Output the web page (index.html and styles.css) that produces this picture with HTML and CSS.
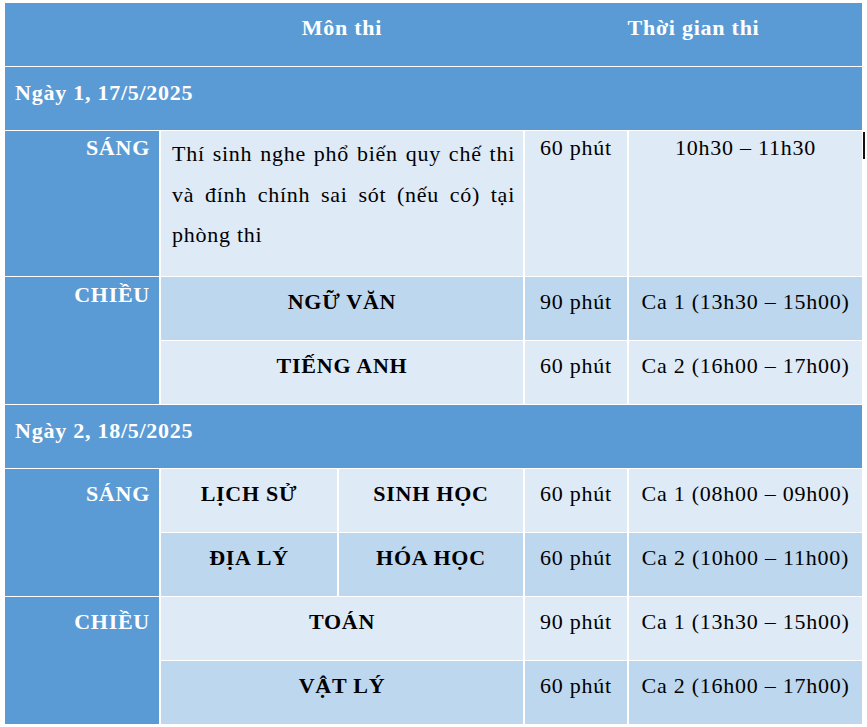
FILE: index.html
```html
<!DOCTYPE html>
<html lang="vi">
<head>
<meta charset="utf-8">
<title>Lịch thi</title>
<link rel="stylesheet" href="styles.css">
</head>
<body>
<div class="sheet">
  <div class="schedule">
    <div class="head">
      <div></div>
      <div class="head-title">Môn thi</div>
      <div class="head-title">Thời gian thi</div>
    </div>

    <div class="day">Ngày 1, 17/5/2025</div>

    <div class="session session-top">SÁNG</div>
    <div class="light note">Thí sinh nghe phổ biến quy chế thi và đính chính sai sót (nếu có) tại phòng thi</div>
    <div class="light cell-top center">60 phút</div>
    <div class="light cell-top center">10h30 – 11h30</div>

    <div class="session session-raised rows-2">CHIỀU</div>
    <div class="mid subject span-2">NGỮ VĂN</div>
    <div class="mid cell center">90 phút</div>
    <div class="mid cell center">Ca 1 (13h30 – 15h00)</div>
    <div class="light subject span-2">TIẾNG ANH</div>
    <div class="light cell center">60 phút</div>
    <div class="light cell center">Ca 2 (16h00 – 17h00)</div>

    <div class="day">Ngày 2, 18/5/2025</div>

    <div class="session rows-2">SÁNG</div>
    <div class="light subject">LỊCH SỬ</div>
    <div class="light subject">SINH HỌC</div>
    <div class="light cell center">60 phút</div>
    <div class="light cell center">Ca 1 (08h00 – 09h00)</div>
    <div class="mid subject">ĐỊA LÝ</div>
    <div class="mid subject">HÓA HỌC</div>
    <div class="mid cell center">60 phút</div>
    <div class="mid cell center">Ca 2 (10h00 – 11h00)</div>

    <div class="session rows-2">CHIỀU</div>
    <div class="light subject span-2">TOÁN</div>
    <div class="light cell center">90 phút</div>
    <div class="light cell center">Ca 1 (13h30 – 15h00)</div>
    <div class="mid subject span-2">VẬT LÝ</div>
    <div class="mid cell center">60 phút</div>
    <div class="mid cell center">Ca 2 (16h00 – 17h00)</div>
  </div>
  <div class="caret"></div>
</div>
</body>
</html>
```

FILE: styles.css
```css
html, body {
  margin: 0;
  padding: 0;
  background: #ffffff;
}

body {
  font-family: "Liberation Serif", "Times New Roman", serif;
  font-size: 22px;
  letter-spacing: 0.75px;
  color: #000000;
}

.sheet {
  position: relative;
  padding: 3px 0 0 5px;
  width: 857px;
}

.schedule {
  display: grid;
  grid-template-columns: 154px 176px 184px 102px 233px;
  grid-template-rows: 63px 63px 145px 63px 63px 63px 63px 63px 63px 63px;
  column-gap: 2px;
  row-gap: 1px;
  background: #ffffff;
}

.schedule > div {
  line-height: 30px;
  box-sizing: border-box;
}

.head {
  grid-column: 1 / -1;
  display: grid;
  grid-template-columns: 154px 362px 337px;
  column-gap: 2px;
  background: #5b9bd5;
  padding-top: 10px;
}

.head-title {
  color: #ffffff;
  font-weight: bold;
  text-align: center;
}

.day {
  grid-column: 1 / -1;
  background: #5b9bd5;
  color: #ffffff;
  font-weight: bold;
  padding: 11px 0 0 10px;
}

.session {
  background: #5b9bd5;
  color: #ffffff;
  font-weight: bold;
  text-align: right;
  padding: 10px 9px 0 0;
}

.schedule > .session-top {
  padding-top: 2px;
}

.schedule > .session-raised {
  padding-top: 3px;
}

.rows-2 {
  grid-row: span 2;
}

.span-2 {
  grid-column: span 2;
}

.light {
  background: #deeaf6;
}

.mid {
  background: #bdd7ee;
}

.cell {
  padding-top: 10px;
}

.cell-top {
  padding-top: 2px;
}

.center {
  text-align: center;
}

.subject {
  font-weight: bold;
  text-align: center;
  padding-top: 10px;
}

.schedule > .note {
  grid-column: span 2;
  text-align: justify;
  line-height: 40.5px;
  padding: 3px 8px 0 11px;
}

.caret {
  position: absolute;
  left: 863px;
  top: 132px;
  width: 2px;
  height: 27px;
  background: #111111;
}
```
